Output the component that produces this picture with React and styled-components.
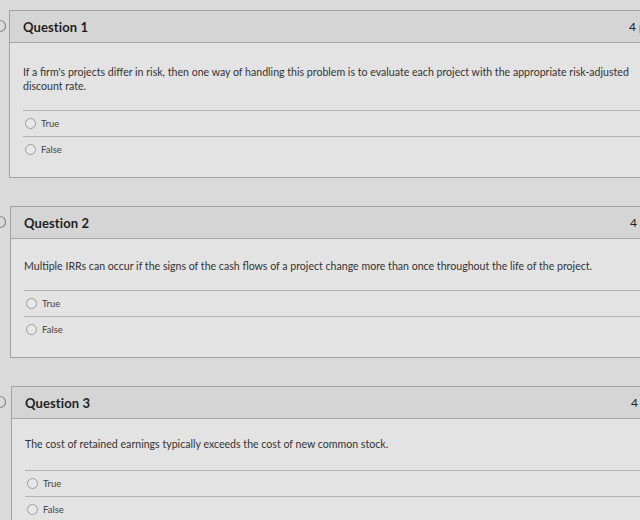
import React from "react";
import styled, { createGlobalStyle } from "styled-components";

const GlobalStyle = createGlobalStyle`
  html, body {
    margin: 0;
    padding: 0;
    background: #dadada;
    overflow: hidden;
  }
  body {
    font-family: Lato, "Open Sans", "Liberation Sans", sans-serif;
    color: #333;
  }
`;

const Page = styled.div`
  width: 640px;
  height: 520px;
  overflow: hidden;
  padding-top: 10px;
  box-sizing: border-box;
  display: flex;
  flex-direction: column;
  gap: 28px;
`;

const QuestionRow = styled.div`
  display: flex;
  align-items: flex-start;
`;

const Marker = styled.div`
  width: ${(p) => p.$indent}px;
  flex: none;
  height: 31px;
  display: flex;
  align-items: center;
`;

const Card = styled.section`
  flex: none;
  width: 650px;
  border: 1px solid #a2a2a2;
  background: #e3e3e3;
`;

const Header = styled.header`
  height: 31px;
  display: flex;
  align-items: center;
  padding: 0 14px 0 13px;
  background: #d5d5d5;
  border-bottom: 1px solid #a6a6a6;
`;

const Title = styled.h2`
  margin: 0;
  font-size: 13px;
  font-weight: 700;
  color: #1f1f1f;
  letter-spacing: 0.1px;
`;

const Points = styled.span`
  margin-left: auto;
  font-size: 12px;
  color: #222;
  width: 17px;
  white-space: nowrap;
  overflow: hidden;
`;

const Body = styled.div`
  padding: ${(p) => p.$top}px 0 15px 13px;
`;

const Prompt = styled.p`
  margin: 0 0 ${(p) => p.$gap}px;
  max-width: 615px;
  font-size: 10.6px;
  line-height: 14px;
  color: #333;
`;

const Answer = styled.label`
  display: flex;
  align-items: center;
  gap: 5px;
  height: 25px;
  border-top: 1px solid #b2b2b2;
  padding-left: 2px;
  font-size: 9.5px;
  color: #444;
`;

const Radio = styled.span`
  width: 9px;
  height: 9px;
  border-radius: 50%;
  border: 1px solid #9c9c9c;
  background: #e8e8e8;
  flex: none;
`;

const questions = [
  {
    n: 1,
    indent: 9,
    top: 22,
    gap: 17,
    text: "If a firm's projects differ in risk, then one way of handling this problem is to evaluate each project with the appropriate risk-adjusted discount rate.",
  },
  {
    n: 2,
    indent: 10,
    top: 20,
    gap: 17,
    text: "Multiple IRRs can occur if the signs of the cash flows of a project change more than once throughout the life of the project.",
  },
  {
    n: 3,
    indent: 11,
    top: 18,
    gap: 19,
    text: "The cost of retained earnings typically exceeds the cost of new common stock.",
  },
];

function Chevron() {
  return (
    <svg width="6" height="14" viewBox="0 0 6 14">
      <path d="M0 1.5 A5.5 5.5 0 0 1 0 12.5" fill="none" stroke="#8a8a8a" strokeWidth="1.2" />
    </svg>
  );
}

function Question({ n, indent, top, gap, text }) {
  return (
    <QuestionRow>
      <Marker $indent={indent}>
        <Chevron />
      </Marker>
      <Card>
        <Header>
          <Title>Question {n}</Title>
          <Points>4 pts</Points>
        </Header>
        <Body $top={top}>
          <Prompt $gap={gap}>{text}</Prompt>
          <Answer>
            <Radio />
            True
          </Answer>
          <Answer>
            <Radio />
            False
          </Answer>
        </Body>
      </Card>
    </QuestionRow>
  );
}

export default function App() {
  return (
    <>
      <GlobalStyle />
      <Page>
        {questions.map((q) => (
          <Question key={q.n} {...q} />
        ))}
      </Page>
    </>
  );
}
